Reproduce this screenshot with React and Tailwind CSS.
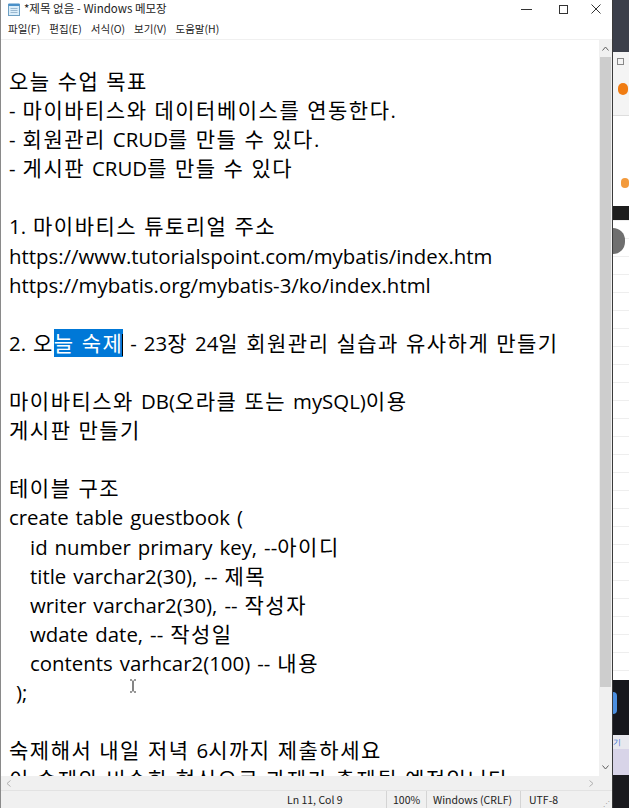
import React from "react";

const body = `"Open Sans", "Noto Sans CJK KR", sans-serif`;
const ui = `"Noto Sans CJK KR", "Liberation Sans", sans-serif`;

const lines = [
  "오늘 수업 목표",
  "- 마이바티스와 데이터베이스를 연동한다.",
  "- 회원관리 CRUD를 만들 수 있다.",
  "- 게시판 CRUD를 만들 수 있다",
  "",
  "1. 마이바티스 튜토리얼 주소",
  "https://www.tutorialspoint.com/mybatis/index.htm",
  "https://mybatis.org/mybatis-3/ko/index.html",
  "",
  "SELECTED",
  "",
  "마이바티스와 DB(오라클 또는 mySQL)이용",
  "게시판 만들기",
  "",
  "테이블 구조",
  "create table guestbook (",
  "   id number primary key, --아이디",
  "   title varchar2(30), -- 제목",
  "   writer varchar2(30), -- 작성자",
  "   wdate date, -- 작성일",
  "   contents varhcar2(100) -- 내용",
  " );",
  "",
  "숙제해서 내일 저녁 6시까지 제출하세요",
  "이 숙제와 비슷한 형식으로 과제가 출제될 예정입니다",
];

// hangul runs are set a little larger so they take the width of the original font
function Runs({ text }) {
  return text.split(/([가-힣]+)/).map((part, i) =>
    i % 2 === 1 ? (
      <span key={i} className="text-[21px] tracking-[1.5px]">
        {part}
      </span>
    ) : (
      <span key={i}>{part}</span>
    )
  );
}

function NotepadIcon() {
  return (
    <svg width="12" height="13" viewBox="0 0 12 13">
      <rect x="0.5" y="1.5" width="11" height="11" fill="#dbeefa" stroke="#6d9fc2" />
      <rect x="0.5" y="0.5" width="11" height="2.5" fill="#4a90c8" />
      <line x1="2.5" y1="5.5" x2="9.5" y2="5.5" stroke="#9ab8d0" />
      <line x1="2.5" y1="7.5" x2="9.5" y2="7.5" stroke="#9ab8d0" />
      <line x1="2.5" y1="9.5" x2="9.5" y2="9.5" stroke="#9ab8d0" />
    </svg>
  );
}

function Line({ text }) {
  if (text === "SELECTED") {
    return (
      <div className="h-[29.1px] leading-[29px] whitespace-pre">
        <Runs text="2. 오" />
        <span className="bg-[#0078d7] text-white">
          <Runs text="늘 숙제" />
        </span>
        <span className="inline-block w-px h-[22px] bg-black align-middle -ml-px"></span>
        <Runs text=" - 23장 24일 회원관리 실습과 유사하게 만들기" />
      </div>
    );
  }
  return (
    <div className="h-[29.1px] leading-[29px] whitespace-pre">
      {text ? <Runs text={text} /> : " "}
    </div>
  );
}

export default function App() {
  return (
    <div className="w-[629px] h-[808px] flex overflow-hidden bg-[#2b2d33]">
      {/* notepad window */}
      <div className="w-[615px] h-full flex flex-col bg-white border-l border-[#8a8a8a] border-r border-r-[#3a3a3a]">
        <div className="h-[18px] flex items-center pl-[7px] text-[11.5px] text-[#222]" style={{ fontFamily: ui }}>
          <NotepadIcon />
          <span className="ml-[4px]">*제목 없음 - Windows 메모장</span>
          <div className="ml-auto flex items-center h-full">
            <div className="w-[42px] flex justify-center">
              <div className="w-[11px] h-px bg-[#333]"></div>
            </div>
            <div className="w-[32px] flex justify-center">
              <div className="w-[9px] h-[9px] border border-[#333]"></div>
            </div>
            <div className="w-[33px] flex justify-center">
              <svg width="10" height="10" viewBox="0 0 10 10">
                <path d="M0.5 0.5 L9.5 9.5 M9.5 0.5 L0.5 9.5" stroke="#333" strokeWidth="1" />
              </svg>
            </div>
          </div>
        </div>
        <div className="h-[22px] flex items-center gap-[9px] pl-[7px] text-[10.5px] text-[#222] border-b border-[#f0f0f0]" style={{ fontFamily: ui }}>
          <span>파일(F)</span>
          <span>편집(E)</span>
          <span>서식(O)</span>
          <span>보기(V)</span>
          <span>도움말(H)</span>
        </div>

        <div className="flex-1 flex min-h-0">
          <div className="relative flex-1 overflow-hidden pl-[8px] pt-[27px] text-[20.4px] [word-spacing:1.7px] text-black" style={{ fontFamily: body }}>
            {lines.map((t, i) => (
              <Line key={i} text={t} />
            ))}
            <svg className="absolute left-[128px] top-[639px]" width="8" height="14" viewBox="0 0 8 14">
              <path d="M1 1 H3 M5 1 H7 M4 1.5 V12.5 M1 13 H3 M5 13 H7" stroke="#333" strokeWidth="1.2" fill="none" />
            </svg>
          </div>
          <div className="w-[13px] flex flex-col bg-[#f0f0f0]">
            <div className="h-[17px] flex items-center justify-center text-[#606060]">
              <svg width="7" height="5" viewBox="0 0 7 5">
                <path d="M0.5 4.5 L3.5 1 L6.5 4.5" stroke="#606060" fill="none" />
              </svg>
            </div>
            <div className="h-[630px] mx-[1px] bg-[#cdcdcd]"></div>
            <div className="flex-1"></div>
            <div className="h-[17px] flex items-center justify-center">
              <svg width="7" height="5" viewBox="0 0 7 5">
                <path d="M0.5 0.5 L3.5 4 L6.5 0.5" stroke="#606060" fill="none" />
              </svg>
            </div>
          </div>
        </div>

        <div className="h-[14px] flex items-center justify-between bg-[#f0f0f0] px-[5px] pr-[18px]">
          <svg width="5" height="7" viewBox="0 0 5 7">
            <path d="M4.5 0.5 L1 3.5 L4.5 6.5" stroke="#b0b0b0" fill="none" />
          </svg>
          <svg width="5" height="7" viewBox="0 0 5 7">
            <path d="M0.5 0.5 L4 3.5 L0.5 6.5" stroke="#b0b0b0" fill="none" />
          </svg>
        </div>

        <div className="h-[18px] flex items-center bg-[#f0f0f0] border-t border-[#e2e2e2] text-[10.5px] text-[#222]" style={{ fontFamily: ui }}>
          <div className="w-[385px] pl-[286px]">Ln 11, Col 9</div>
          <div className="h-full border-l border-[#d4d4d4] w-[40px] pl-[6px] flex items-center">100%</div>
          <div className="h-full border-l border-[#d4d4d4] w-[94px] pl-[6px] flex items-center">Windows (CRLF)</div>
          <div className="h-full border-l border-[#d4d4d4] flex-1 pl-[8px] flex items-center">UTF-8</div>
          <div className="pr-[2px] text-[7px] text-[#999] self-end">⋰</div>
        </div>
      </div>

      {/* background windows on the right */}
      <div className="flex-1 flex flex-col">
        <div className="h-[52px] bg-[#3b3f4a]"></div>
        <div className="h-[64px] bg-[#f4f4f4] border-b border-[#ddd] pt-[6px]">
          <div className="w-[7px] h-[7px] border border-[#888] ml-[4px]"></div>
          <div className="w-[10px] h-[12px] rounded-full bg-[#f07c12] ml-[5px] mt-[18px]"></div>
        </div>
        <div className="h-[90px] bg-white pt-[62px]">
          <div className="w-[8px] h-[10px] rounded-full bg-[#f39a3c] ml-[8px]"></div>
        </div>
        <div className="h-[14px] bg-[#1d1d1d]"></div>
        <div className="h-[460px] bg-white bg-[linear-gradient(#eeeeee_1px,transparent_1px)] bg-[length:100%_18px] pt-[8px]">
          <div className="w-[12px] h-[26px] rounded-r-full bg-[#6f6f6f]"></div>
        </div>
        <div className="h-[55px] bg-[#16171c] pt-[12px]">
          <div className="w-[4px] h-[22px] rounded-r-full bg-[#4b8fe0]"></div>
        </div>
        <div className="h-[14px] bg-[#e8e8ee] text-[8px] text-[#2f6fd0] leading-[14px]">기</div>
        <div className="h-[26px] bg-[#d8d4e8]"></div>
        <div className="flex-1 bg-[#1a1a1e]"></div>
      </div>
    </div>
  );
}
